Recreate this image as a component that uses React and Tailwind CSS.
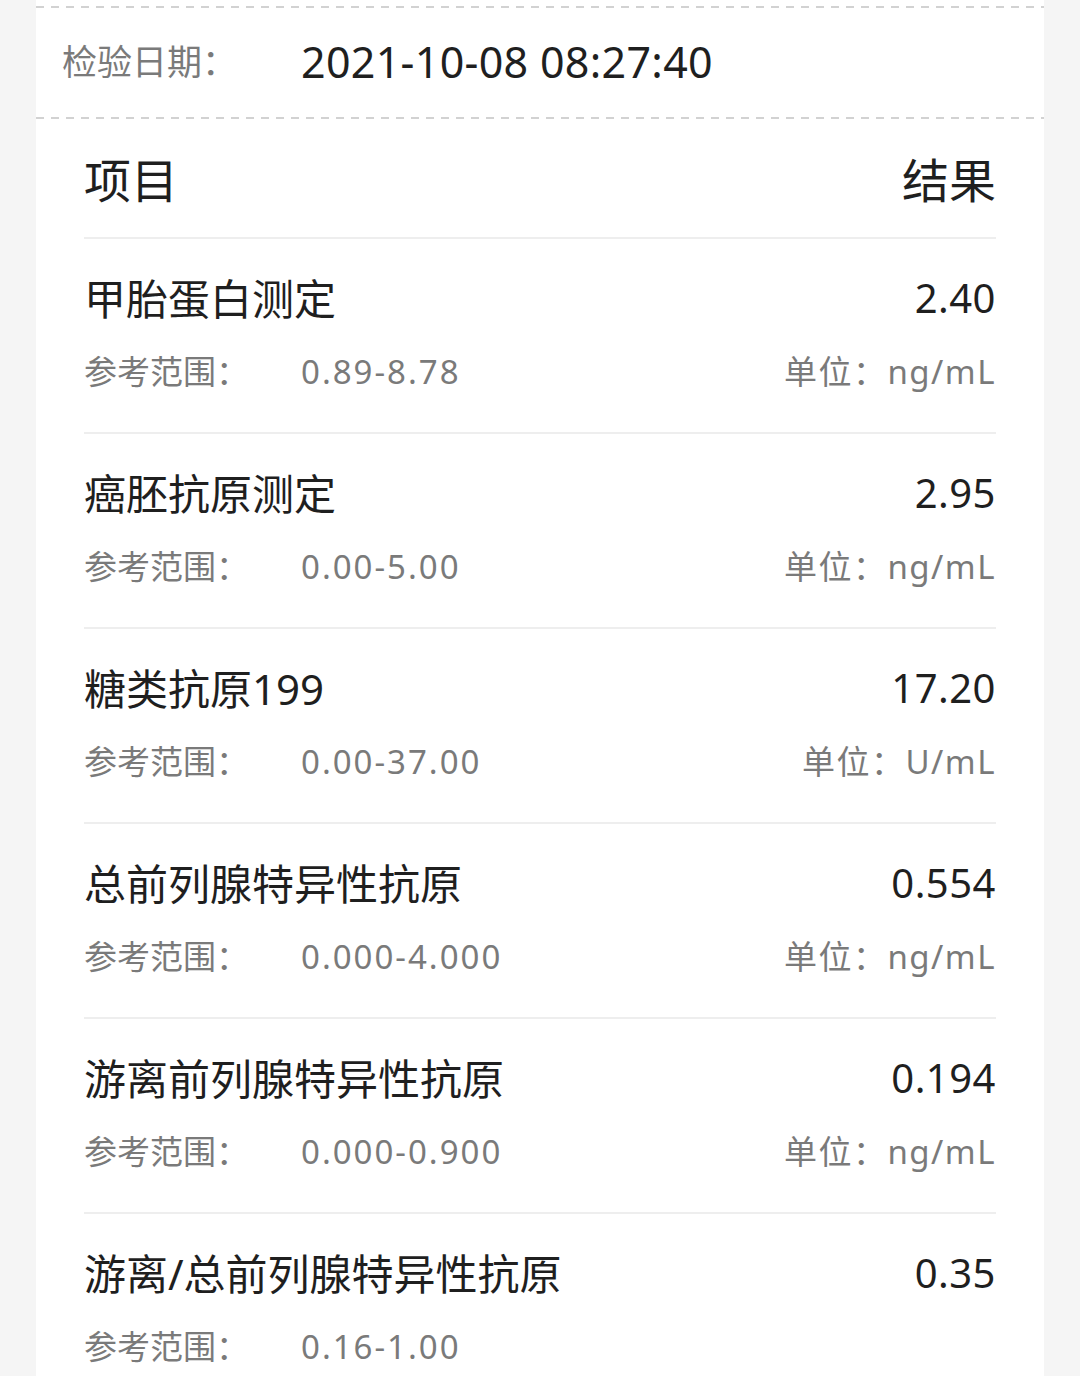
const FONT = { fontFamily: '"Noto Sans", "Noto Sans CJK SC", sans-serif' };

const items = [
  { name: '甲胎蛋白测定', value: '2.40', range: '0.89-8.78', unit: 'ng/mL' },
  { name: '癌胚抗原测定', value: '2.95', range: '0.00-5.00', unit: 'ng/mL' },
  { name: '糖类抗原199', value: '17.20', range: '0.00-37.00', unit: 'U/mL' },
  { name: '总前列腺特异性抗原', value: '0.554', range: '0.000-4.000', unit: 'ng/mL' },
  { name: '游离前列腺特异性抗原', value: '0.194', range: '0.000-0.900', unit: 'ng/mL' },
  { name: '游离/总前列腺特异性抗原', value: '0.35', range: '0.16-1.00', unit: '' },
];

function Dashed() {
  return (
    <div className="h-[2px] w-full bg-[linear-gradient(to_right,#d2d2d2_8px,transparent_8px)] bg-[length:15px_2px] bg-repeat-x" />
  );
}

export default function App() {
  return (
    <div className="min-h-screen bg-[#f5f5f5]" style={FONT}>
      <div className="ml-[36px] w-[1008px] bg-white pt-[6px] pb-10">
        <Dashed />
        <div className="flex h-[109px] items-center px-[26px]">
          <span className="w-[239px] text-[35px] text-[#7a7a7a]">检验日期：</span>
          <span className="text-[43px] tracking-[0.3px] text-[#1f1f1f]">2021-10-08 08:27:40</span>
        </div>
        <Dashed />

        <div className="px-[48px]">
          <div className="flex h-[118px] items-center justify-between pt-[4px] text-[47px] leading-none text-[#1f1f1f]">
            <span>项目</span>
            <span>结果</span>
          </div>

          {items.map((it, i) => (
            <div key={i}>
              <div className="h-[2px] bg-[#eeeeee]" />
              <div className="pt-[39px] pb-[42px]">
                <div className="flex h-[40px] items-center justify-between text-[42px] text-[#1f1f1f]">
                  <span>{it.name}</span>
                  <span className="text-[40px] tracking-[0.5px]">{it.value}</span>
                </div>
                <div className="mt-[36px] flex h-[36px] items-center justify-between text-[33px] text-[#7a7a7a]">
                  <div className="flex items-center">
                    <span className="w-[217px]">参考范围：</span>
                    <span className="tracking-[2px]">{it.range}</span>
                  </div>
                  {it.unit && <span className="tracking-[1.5px]">单位：{it.unit}</span>}
                </div>
              </div>
            </div>
          ))}
        </div>
      </div>
    </div>
  );
}
